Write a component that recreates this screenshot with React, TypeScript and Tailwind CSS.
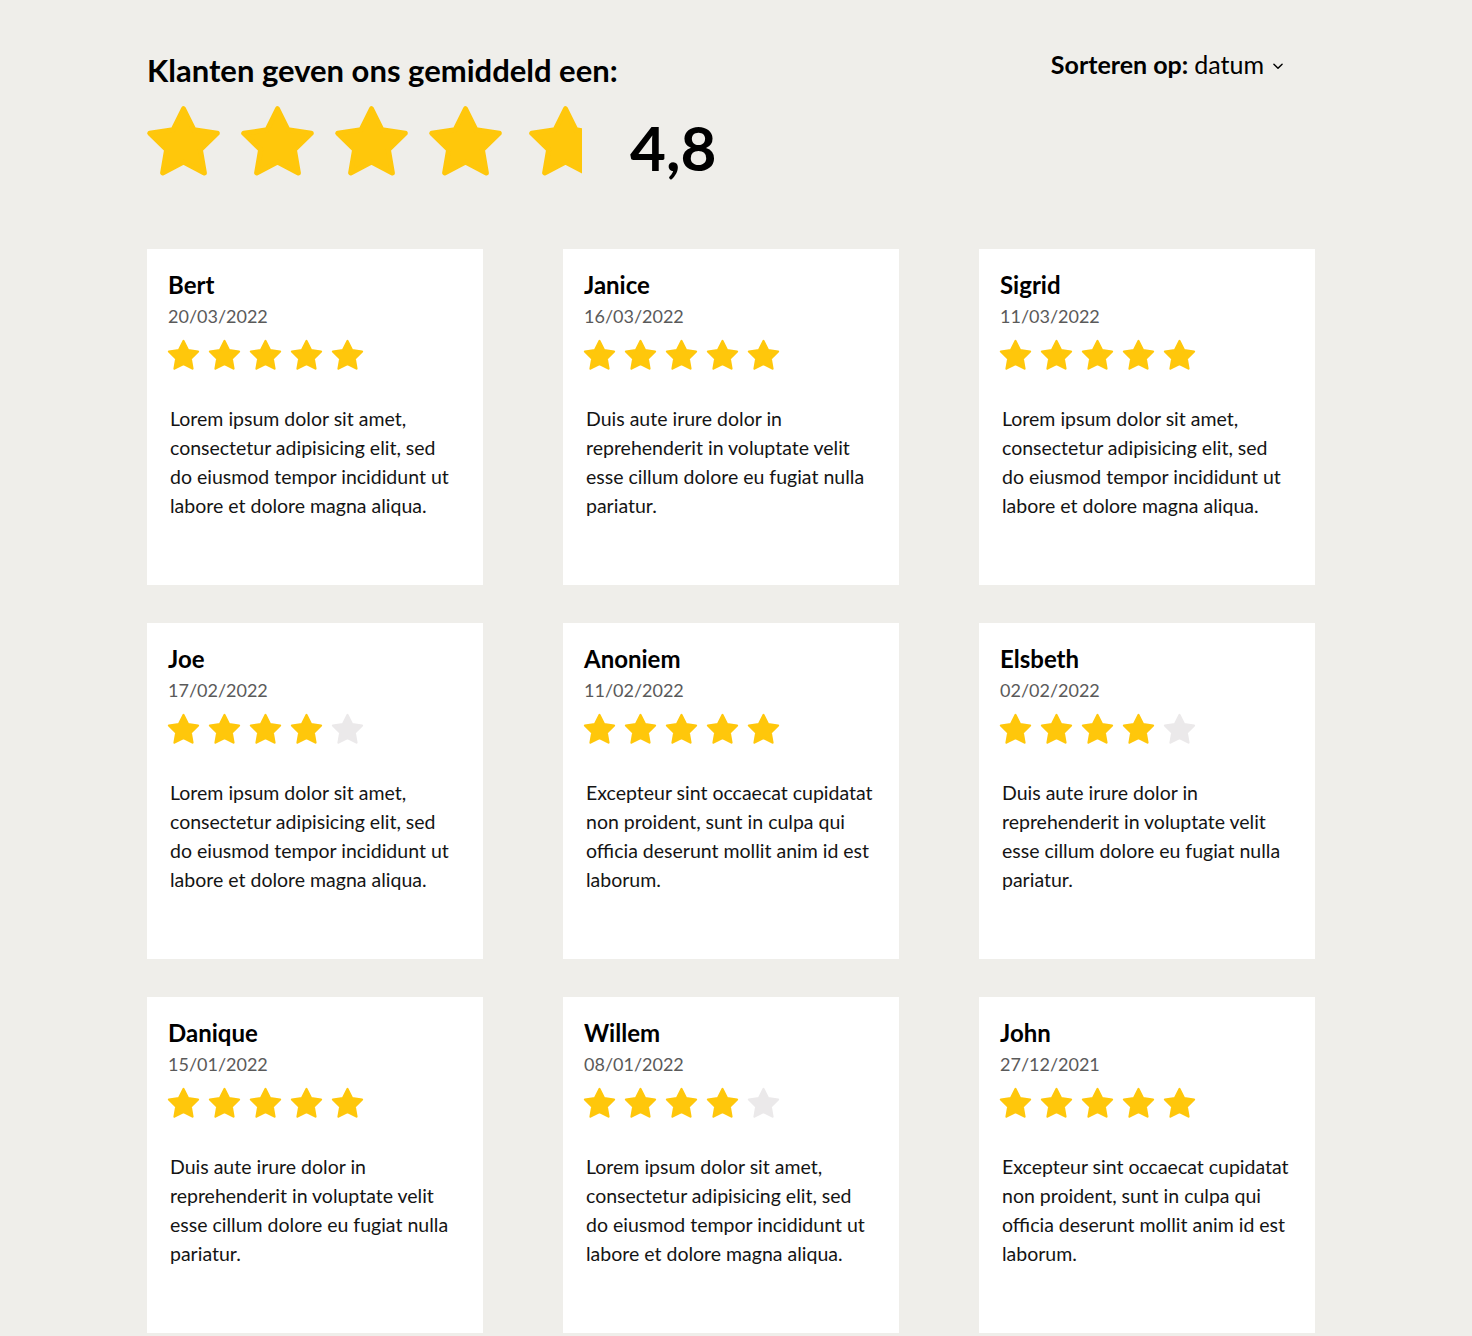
const font = "font-['Lato','Liberation_Sans',sans-serif]";

const LOREM = "Lorem ipsum dolor sit amet, consectetur adipisicing elit, sed do eiusmod tempor incididunt ut labore et dolore magna aliqua.";
const DUIS = "Duis aute irure dolor in reprehenderit in voluptate velit esse cillum dolore eu fugiat nulla pariatur.";
const EXCEPTEUR = "Excepteur sint occaecat cupidatat non proident, sunt in culpa qui officia deserunt mollit anim id est laborum.";

const reviews = [
  { name: "Bert", date: "20/03/2022", stars: 5, text: LOREM },
  { name: "Janice", date: "16/03/2022", stars: 5, text: DUIS },
  { name: "Sigrid", date: "11/03/2022", stars: 5, text: LOREM },
  { name: "Joe", date: "17/02/2022", stars: 4, text: LOREM },
  { name: "Anoniem", date: "11/02/2022", stars: 5, text: EXCEPTEUR },
  { name: "Elsbeth", date: "02/02/2022", stars: 4, text: DUIS },
  { name: "Danique", date: "15/01/2022", stars: 5, text: DUIS },
  { name: "Willem", date: "08/01/2022", stars: 4, text: LOREM },
  { name: "John", date: "27/12/2021", stars: 5, text: EXCEPTEUR },
];

function Star({ size, color }: { size: number; color: string }) {
  return (
    <svg width={size} height={size} viewBox="0 0 24 24" className="shrink-0 block">
      <polygon
        points="12,2 15.09,8.26 22,9.27 17,14.14 18.18,21.02 12,17.77 5.82,21.02 7,14.14 2,9.27 8.91,8.26"
        fill={color}
        stroke={color}
        strokeWidth={1.5}
        strokeLinejoin="round"
      />
    </svg>
  );
}

function ReviewCard({ name, date, stars, text }: (typeof reviews)[number]) {
  return (
    <div className="bg-white h-[336px] pt-[21px] pl-[21px] pr-[24px]">
      <p className="font-bold text-[24px] leading-[30px] text-black">{name}</p>
      <p className="mt-[3px] text-[18px] leading-[26px] text-[#5a5a5a]">{date}</p>
      <div className="flex gap-[6px] mt-[9px] -ml-[2px]">
        {[0, 1, 2, 3, 4].map((i) => (
          <Star key={i} size={35} color={i < stars ? "#ffc70b" : "#ebe9ea"} />
        ))}
      </div>
      <p className="mt-[31px] pl-[2px] text-[19.5px] leading-[29px] text-[#141414] max-w-[292px]">{text}</p>
    </div>
  );
}

export default function App() {
  return (
    <div className={`${font} bg-[#efeeea] min-h-screen w-full`}>
      <div className="w-[1168px] ml-[147px] pt-[52px] pb-[4px]">
        <div className="flex justify-between items-start pr-[30px]">
          <div>
            <h1 className="font-bold text-[31px] leading-[36px] text-black">Klanten geven ons gemiddeld een:</h1>
            <div className="flex items-center mt-[14px] -ml-[4px]">
              <div className="flex gap-[13px]">
                {[0, 1, 2, 3].map((i) => (
                  <Star key={i} size={81} color="#ffc70b" />
                ))}
                <div className="ml-[6px] w-[57px] overflow-hidden">
                  <Star size={81} color="#ffc70b" />
                </div>
              </div>
              <span className="ml-[48px] mt-[8px] font-bold text-[62px] leading-[62px] text-black">4,8</span>
            </div>
          </div>
          <div className="flex items-center text-[25px] leading-[30px] text-black -mt-[3px]">
            <span className="font-bold">Sorteren op:</span>
            <span className="ml-[6px]">datum</span>
            <svg width="14" height="14" viewBox="0 0 24 24" className="ml-[7px] mt-[4px]" fill="none" stroke="#000" strokeWidth="2.5" strokeLinecap="round" strokeLinejoin="round">
              <path d="M5 9l7 7 7-7" />
            </svg>
          </div>
        </div>
        <div className="grid grid-cols-3 gap-x-[80px] gap-y-[38px] mt-[66px]">
          {reviews.map((r) => (
            <ReviewCard key={r.name} {...r} />
          ))}
        </div>
      </div>
    </div>
  );
}
